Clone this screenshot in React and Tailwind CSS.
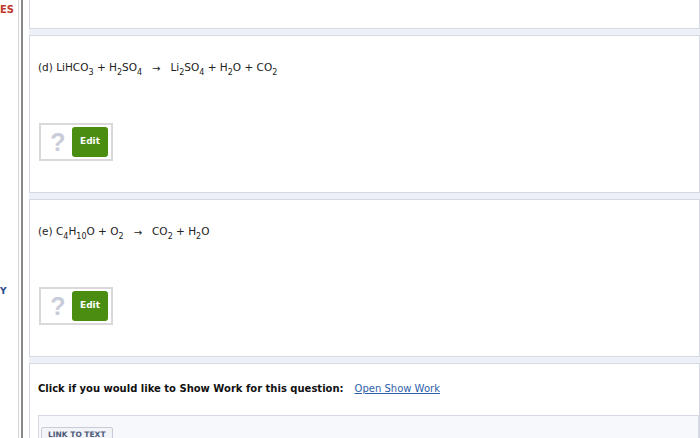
import React from 'react'

function Sub({ children }) {
  return <sub className="text-[8px] align-[-2px] leading-none">{children}</sub>
}

function Arrow() {
  return <span className="inline-block mx-[10px] text-[10px] align-[4px]">→</span>
}

function AnswerBox() {
  return (
    <div className="w-[74px] h-[38px] border-2 border-[#d9d9dc] bg-white flex items-center pl-[9px] gap-[6px]">
      <span className="text-[25px] font-bold text-[#c9ccd9] leading-none w-[16px] text-center" style={{ fontFamily: '"Liberation Sans", Arial, sans-serif' }}>?</span>
      <button className="w-[36px] h-[30px] rounded-[3px] bg-[#4b8d10] text-white text-[9px] font-bold">Edit</button>
    </div>
  )
}

function Panel({ children, className = '' }) {
  return (
    <div className={'bg-white border border-[#d5d8e2] ' + className}>{children}</div>
  )
}

export default function App() {
  return (
    <div className="w-[700px] h-[438px] overflow-hidden flex bg-white text-[#222]" style={{ fontFamily: '"DejaVu Sans", Verdana, sans-serif' }}>
      {/* left nav, mostly scrolled off */}
      <div className="w-[18px] shrink-0 flex flex-col">
        <div className="pt-[3px] text-[10px] font-bold text-[#c0392b] leading-[14px]">ES</div>
        <div className="mt-[268px] text-[9px] font-bold text-[#2b4a8a] leading-[12px]">Y</div>
      </div>
      <div className="w-[1px] bg-[#d3d3d3]" />
      <div className="w-[2px] bg-white" />
      <div className="w-[2px] bg-[#8a8a8a]" />
      <div className="flex-1 pl-[6px] bg-white">
        <div className="flex flex-col gap-[6px] bg-[#eef0f7] -mt-[10px]">
          <Panel className="h-[39px] border-t-0" />
          <Panel className="h-[158px] pl-[8px] pt-[24px]">
            <div className="text-[10.5px] h-[16px] flex items-center">
              <span>(d) LiHCO<Sub>3</Sub> + H<Sub>2</Sub>SO<Sub>4</Sub></span>
              <Arrow />
              <span>Li<Sub>2</Sub>SO<Sub>4</Sub> + H<Sub>2</Sub>O + CO<Sub>2</Sub></span>
            </div>
            <div className="mt-[47px] ml-[1px]">
              <AnswerBox />
            </div>
          </Panel>
          <Panel className="h-[158px] pl-[8px] pt-[24px]">
            <div className="text-[10.5px] h-[16px] flex items-center">
              <span>(e) C<Sub>4</Sub>H<Sub>10</Sub>O + O<Sub>2</Sub></span>
              <Arrow />
              <span>CO<Sub>2</Sub> + H<Sub>2</Sub>O</span>
            </div>
            <div className="mt-[47px] ml-[1px]">
              <AnswerBox />
            </div>
          </Panel>
          <Panel className="h-[100px] pl-[8px] pt-[16px]">
            <div className="text-[10px] h-[16px] flex items-center">
              <span className="font-bold text-[#111]">Click if you would like to Show Work for this question:</span>
              <a href="#" className="ml-[11px] text-[#2f5fa8] underline">Open Show Work</a>
            </div>
            <div className="mt-[19px] border border-[#d8dae3] bg-[#f7f8fb] h-[40px] px-[2px] pt-[4px]">
              <div className="inline-block border border-[#c9ccd8] bg-[#f3f4f8] rounded-[2px] px-[6px] py-[2px] text-[7.5px] leading-[10px] font-bold text-[#4d5b78]">LINK TO TEXT</div>
            </div>
          </Panel>
        </div>
      </div>
    </div>
  )
}
